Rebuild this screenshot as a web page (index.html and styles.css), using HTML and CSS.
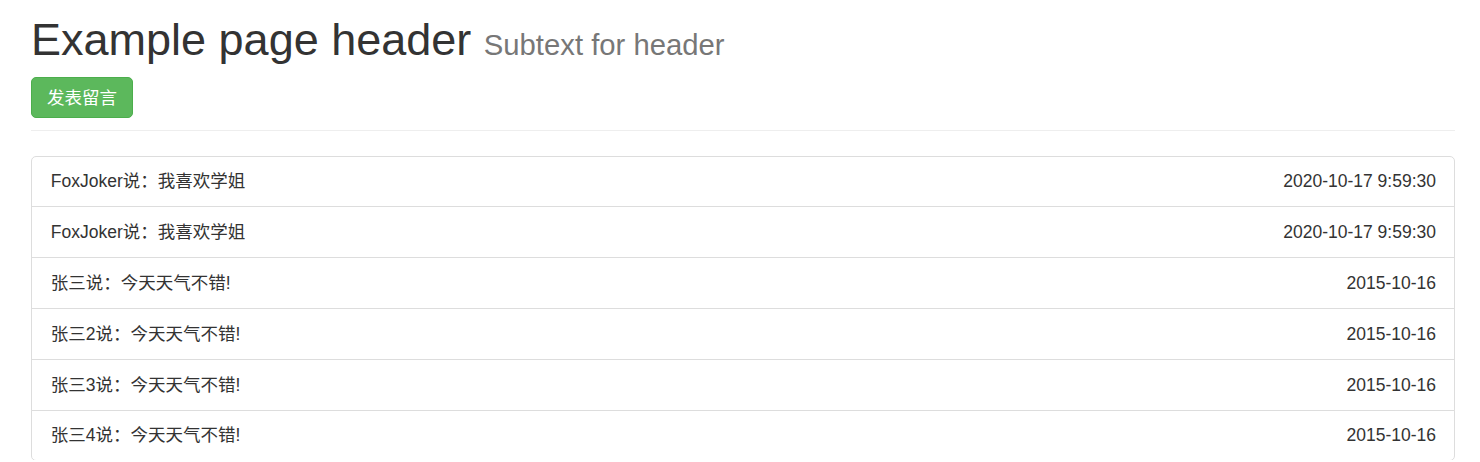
FILE: index.html
```html
<!DOCTYPE html>
<html lang="zh-CN">

<head>
  <meta charset="UTF-8" />
  <title>留言板</title>
  <link rel="stylesheet" href="styles.css">
</head>

<body>
  <div class="container">
    <div class="page-header">
      <h1>Example page header <small>Subtext for header</small></h1>
      <button class="btn btn-success">发表留言</button>
    </div>

    <ul class="list-group">
      <li class="list-group-item"><span class="time">2020-10-17 9:59:30</span>FoxJoker说：我喜欢学姐</li>
      <li class="list-group-item"><span class="time">2020-10-17 9:59:30</span>FoxJoker说：我喜欢学姐</li>
      <li class="list-group-item"><span class="time">2015-10-16</span>张三说：今天天气不错!</li>
      <li class="list-group-item"><span class="time">2015-10-16</span>张三2说：今天天气不错!</li>
      <li class="list-group-item"><span class="time">2015-10-16</span>张三3说：今天天气不错!</li>
      <li class="list-group-item"><span class="time">2015-10-16</span>张三4说：今天天气不错!</li>
    </ul>
  </div>
</body>

</html>
```

FILE: styles.css
```css
body {
  margin: 0;
  font-family: "Liberation Sans", Arial, "Noto Sans CJK SC", sans-serif;
  font-size: 17.5px;
  line-height: 25px;
  color: #333;
  background: #fff;
}

.container {
  padding: 0 25px 0 31px;
}

.page-header {
  padding-bottom: 12px;
  border-bottom: 1px solid #eee;
  margin-bottom: 25px;
}

.page-header h1 {
  margin: 14.5px 0 12.5px;
  font-size: 45px;
  line-height: 1.1;
  font-weight: 500;
  color: #333;
}

.page-header h1 small {
  font-size: 65%;
  line-height: 1;
  font-weight: normal;
  color: #777;
}

.btn {
  display: block;
  height: 41px;
  padding: 1px 15px 0;
  font-family: inherit;
  font-size: 17.5px;
  line-height: 39px;
  border-radius: 5px;
  cursor: pointer;
}

.btn-success {
  background: #5cb85c;
  border: 1px solid #4cae4c;
  color: #fff;
}

.btn-success:hover {
  background: #449d44;
}

.list-group {
  list-style: none;
  margin: 0;
  padding: 0;
}

.list-group-item {
  padding: 12.8px 18px 12.03px 18.75px;
  border: 1px solid #ddd;
  margin-bottom: -1px;
  background: #fff;
}

.list-group-item:first-child {
  border-top-left-radius: 5px;
  border-top-right-radius: 5px;
}

.list-group-item:last-child {
  border-bottom-left-radius: 5px;
  border-bottom-right-radius: 5px;
}

.time {
  float: right;
}
```
